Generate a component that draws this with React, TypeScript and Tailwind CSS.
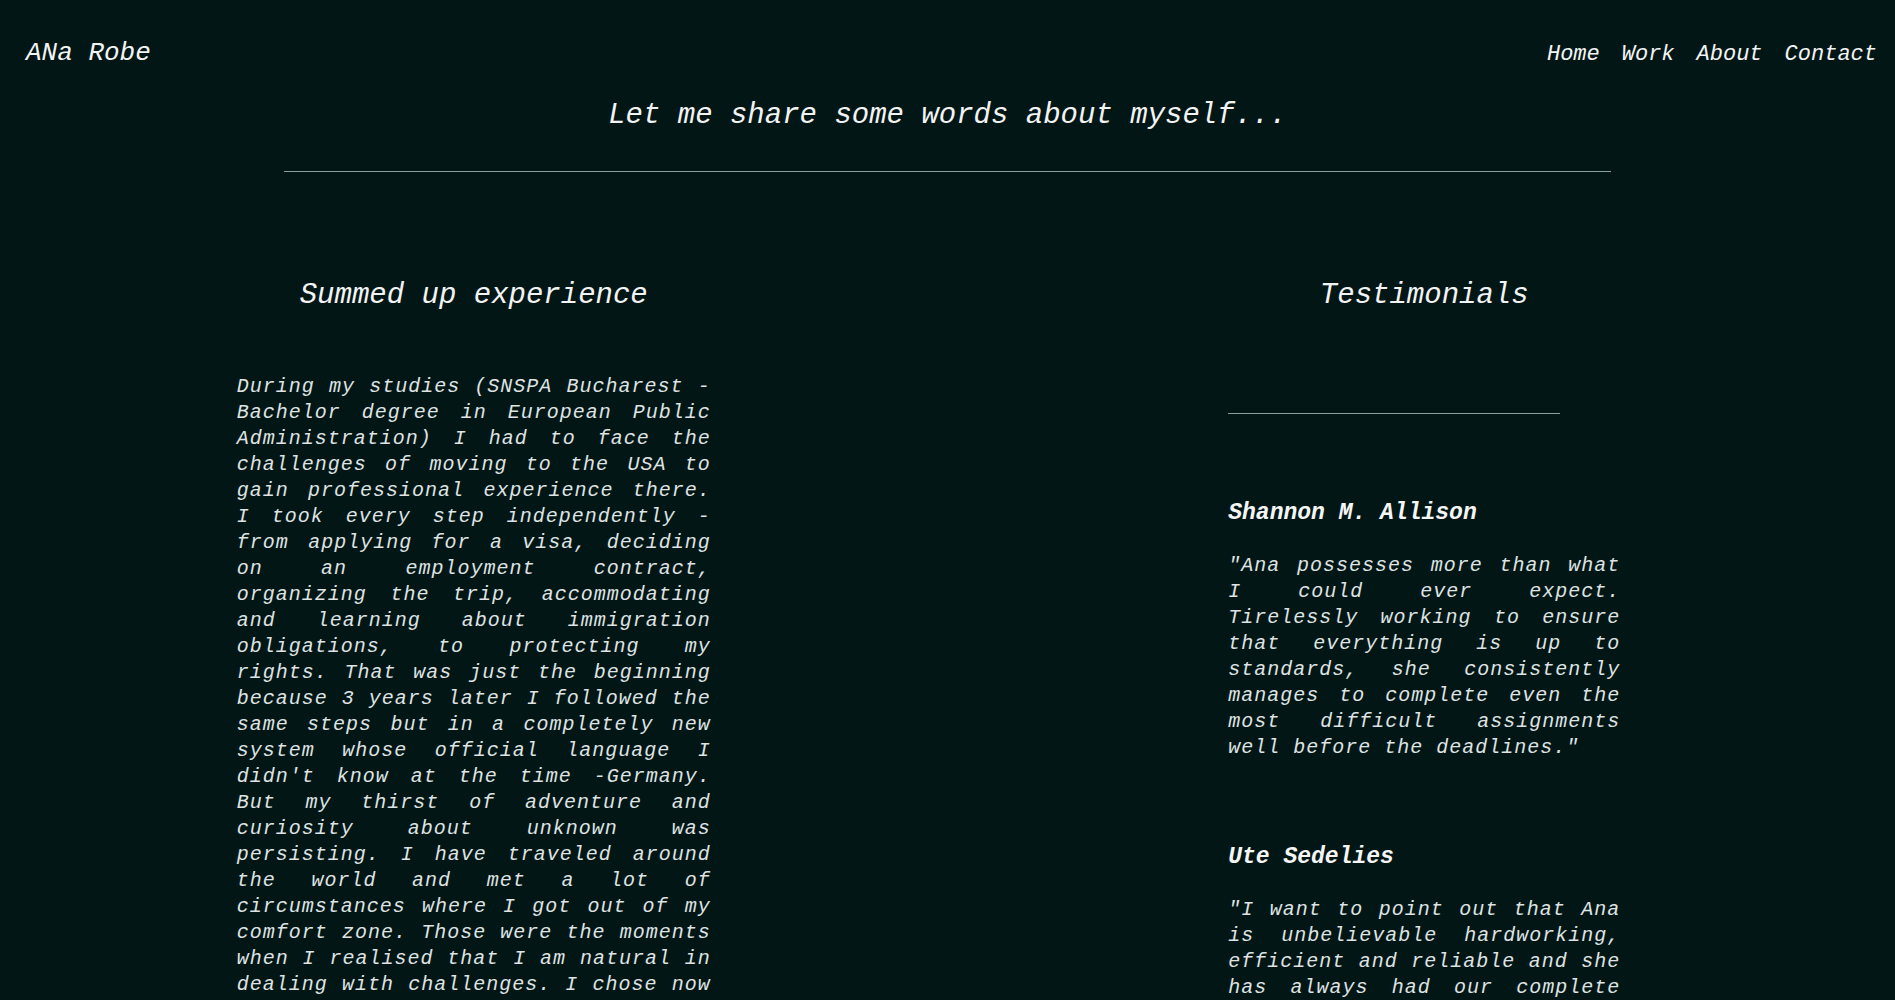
import React from 'react';

// 추천글 데이터
const testimonials = [
    {
        name: 'Shannon M. Allison',
        text: '"Ana possesses more than what I could ever expect. Tirelessly working to ensure that everything is up to standards, she consistently manages to complete even the most difficult assignments well before the deadlines."',
    },
    {
        name: 'Ute Sedelies',
        text: '"I want to point out that Ana is unbelievable hardworking, efficient and reliable and she has always had our complete trust. She is a person you can count on in every situation."',
    },
];

const experience =
    "During my studies (SNSPA Bucharest - Bachelor degree in European Public Administration) I had to face the challenges of moving to the USA to gain professional experience there. I took every step independently - from applying for a visa, deciding on an employment contract, organizing the trip, accommodating and learning about immigration obligations, to protecting my rights. That was just the beginning because 3 years later I followed the same steps but in a completely new system whose official language I didn't know at the time -Germany. But my thirst of adventure and curiosity about unknown was persisting. I have traveled around the world and met a lot of circumstances where I got out of my comfort zone. Those were the moments when I realised that I am natural in dealing with challenges. I chose now to turn this experience into a profession and to help others take the same steps with confidence.";

function App() {
    return (
        <div className="min-h-screen bg-[#021616] italic text-[#f2f4f4] font-['Liberation_Mono','DejaVu_Sans_Mono',monospace]">
            {/* 상단 헤더 */}
            <header className="flex justify-between items-baseline pl-[26px] pr-[18px] pt-[38px]">
                <div className="text-[26px] leading-[30px]">ANa Robe</div>
                <nav className="flex gap-[22px] text-[22px] leading-[30px]">
                    <a href="#">Home</a>
                    <a href="#">Work</a>
                    <a href="#">About</a>
                    <a href="#">Contact</a>
                </nav>
            </header>

            <h1 className="mt-[28px] text-center text-[29px] leading-[35px]">
                Let me share some words about myself...
            </h1>
            <hr className="w-[70%] mx-auto mt-[38px] border-0 border-t border-[#8e9c9a]"/>

            <div className="grid grid-cols-2 pt-[106px]">
                {/* 경력 요약 */}
                <section className="flex flex-col items-center">
                    <h2 className="text-[29px] leading-[35px]">Summed up experience</h2>
                    <p className="mt-[61px] w-[474px] text-justify text-[20px] leading-[26px] tracking-[1px] text-[#dfe3e3]">
                        {experience}
                    </p>
                </section>

                {/* 추천글 */}
                <section className="flex flex-col items-center pl-[6px]">
                    <h2 className="text-[29px] leading-[35px]">Testimonials</h2>
                    <div className="w-[392px]">
                        <hr className="w-[332px] mt-[100px] border-0 border-t border-[#8e9c9a]"/>
                        {testimonials.map((t, i) => (
                            <div key={t.name} className={i === 0 ? 'mt-[85px]' : 'mt-[82px]'}>
                                <h3 className="text-[23px] leading-[28px] font-bold text-[#f4f6f6]">{t.name}</h3>
                                <p className="mt-[26px] text-justify text-[20px] leading-[26px] tracking-[1px] text-[#dfe3e3]">
                                    {t.text}
                                </p>
                            </div>
                        ))}
                    </div>
                </section>
            </div>
        </div>
    );
}

export default App;
